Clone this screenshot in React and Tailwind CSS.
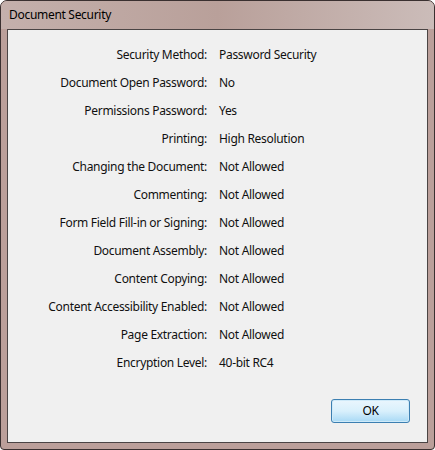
const ROWS = [
  ['Security Method:', 'Password Security'],
  ['Document Open Password:', 'No'],
  ['Permissions Password:', 'Yes'],
  ['Printing:', 'High Resolution'],
  ['Changing the Document:', 'Not Allowed'],
  ['Commenting:', 'Not Allowed'],
  ['Form Field Fill-in or Signing:', 'Not Allowed'],
  ['Document Assembly:', 'Not Allowed'],
  ['Content Copying:', 'Not Allowed'],
  ['Content Accessibility Enabled:', 'Not Allowed'],
  ['Page Extraction:', 'Not Allowed'],
  ['Encryption Level:', '40-bit RC4'],
]

export default function App() {
  return (
    <div
      className="w-[435px] h-[450px] flex flex-col border border-[#3a3030] rounded-t-[7px] rounded-b-[4px] bg-[#bb9f9a] overflow-hidden tracking-[-0.3px]"
      style={{ fontFamily: '"Noto Sans", "Open Sans", sans-serif' }}
    >
      <div className="h-[28px] shrink-0 flex items-center pl-[8px] text-[12px] text-black bg-gradient-to-r from-[#c4b0ac] via-[#b9a09a] to-[#cbbcb9]">
        Document Security
      </div>
      <div className="flex-1 mx-[6px] mb-[6px] border border-[#4a4444] bg-[#f0f0f0] flex flex-col">
        <div className="pt-[11px] grid grid-cols-[199px_1fr] gap-x-[12px] text-[12px] text-[#101010]">
          {ROWS.map(([label, value]) => (
            <div key={label} className="contents">
              <div className="h-[28px] flex items-center justify-end whitespace-nowrap">{label}</div>
              <div className="h-[28px] flex items-center whitespace-nowrap">{value}</div>
            </div>
          ))}
        </div>
        <div className="flex-1" />
        <div className="flex justify-end pr-[17px] pb-[19px]">
          <button className="w-[79px] h-[24px] rounded-[3px] border border-[#3c7fb1] bg-gradient-to-b from-[#eaf6fd] via-[#d9f0fc] to-[#a7d9f5] text-[12px] text-black shadow-[inset_0_0_0_1px_#cfeaf9]">
            OK
          </button>
        </div>
      </div>
    </div>
  )
}
